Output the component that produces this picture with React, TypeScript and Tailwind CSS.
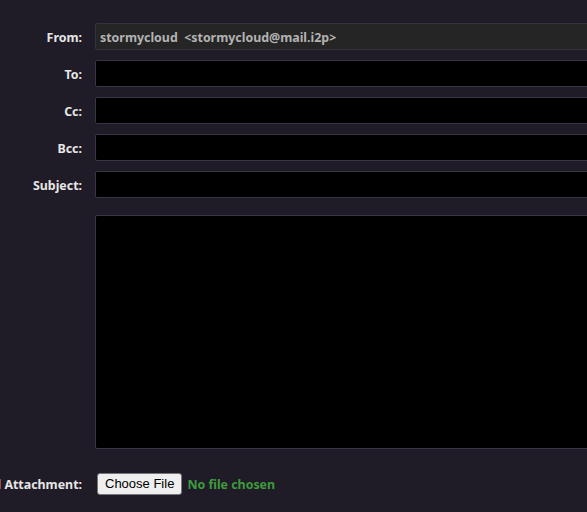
import React from "react";

const font = { fontFamily: '"Noto Sans", "Open Sans", sans-serif' };

function Row({ label, children }: { label: string; children: React.ReactNode }) {
  return (
    <div className="flex items-center">
      <div className="flex w-[82px] shrink-0 justify-end whitespace-nowrap pt-[3px] text-[12.4px] font-bold text-[#e6e6e6]">
        {label}
      </div>
      <div className="ml-[13px] flex-1">{children}</div>
    </div>
  );
}

export default function App() {
  return (
    <div
      className="h-[512px] w-[587px] overflow-hidden bg-[#201c27] pt-[23px]"
      style={font}
    >
      <div className="flex w-[620px] flex-col gap-[10px]">
        <Row label="From:">
          <div className="flex h-[27px] items-center rounded-[2px] border border-[#37333d] bg-[#252525] px-[4px] pt-[3px] text-[12.4px] font-bold text-[#b3b3b3]">
            stormycloud&nbsp; &lt;stormycloud@mail.i2p&gt;
          </div>
        </Row>
        <Row label="To:">
          <input className="block h-[27px] w-full rounded-[2px] border border-[#3a3545] bg-black outline-none" />
        </Row>
        <Row label="Cc:">
          <input className="block h-[27px] w-full rounded-[2px] border border-[#3a3545] bg-black outline-none" />
        </Row>
        <Row label="Bcc:">
          <input className="block h-[27px] w-full rounded-[2px] border border-[#3a3545] bg-black outline-none" />
        </Row>
        <Row label="Subject:">
          <input className="block h-[27px] w-full rounded-[2px] border border-[#3a3545] bg-black outline-none" />
        </Row>
        <div className="mt-[7px] flex">
          <div className="w-[82px] shrink-0" />
          <textarea className="ml-[13px] block h-[234px] flex-1 resize-none rounded-[2px] border border-[#3a3545] bg-black outline-none" />
        </div>
        <div className="mt-[14px]">
          <Row label="Add Attachment:">
            <div className="flex items-center">
              <button
                className="ml-[2px] h-[22px] rounded-[3px] border border-[#767676] bg-[#efefef] px-[7px] text-[13px] text-black"
                style={{ fontFamily: '"Liberation Sans", Arial, sans-serif' }}
              >
                Choose File
              </button>
              <span className="ml-[5px] pt-[3px] text-[12.4px] font-bold text-[#3d9b3d]">
                No file chosen
              </span>
            </div>
          </Row>
        </div>
      </div>
    </div>
  );
}
